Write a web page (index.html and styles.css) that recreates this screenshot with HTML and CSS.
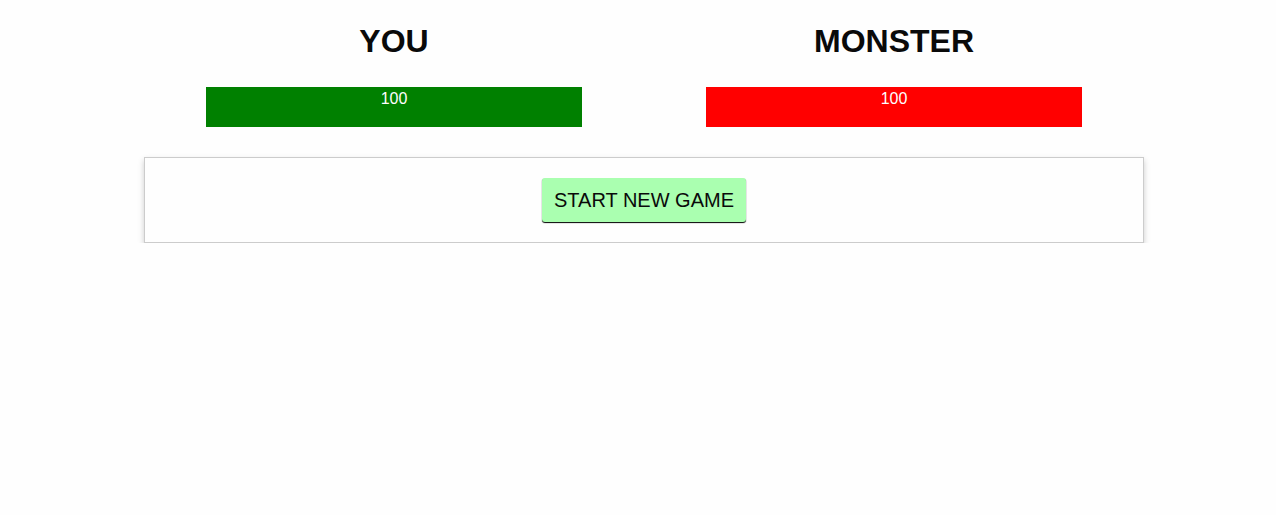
FILE: index.html
```html
<!DOCTYPE html>
<html lang="en">
<head>
<meta charset="utf-8">
<title>Monster Slayer</title>
<link rel="stylesheet" href="styles.css">
</head>
<body>
<div class="app">
  <section class="row">
    <div class="column">
      <h1 class="name">YOU</h1>
      <div class="healthbar">
        <div class="health health-player" style="width: 100%">100</div>
      </div>
    </div>
    <div class="column">
      <h1 class="name">MONSTER</h1>
      <div class="healthbar">
        <div class="health health-monster" style="width: 100%">100</div>
      </div>
    </div>
  </section>
  <section class="controls">
    <button class="start-game">START NEW GAME</button>
  </section>
</div>
</body>
</html>
```

FILE: styles.css
```css
html, body {
  margin: 0;
  background: #fefefe;
  color: #0a0a0a;
  font-family: "Liberation Sans", Arial, sans-serif;
}

body {
  padding: 0 0 0 12px;
}

.app {
  width: 1000px;
  margin: 0 auto;
}

.row {
  display: flex;
}

.column {
  width: 50%;
  padding: 0 15px;
  box-sizing: border-box;
  text-align: center;
}

.name {
  font-size: 32px;
  font-weight: bold;
  line-height: 40px;
  margin: 21px 0 26px;
}

.healthbar {
  width: 80%;
  height: 40px;
  margin: 0 auto;
  background-color: #eee;
}

.health {
  height: 100%;
  color: #fefefe;
  font-size: 16px;
  line-height: 24px;
  text-align: center;
}

.health-player {
  background-color: #008000;
}

.health-monster {
  background-color: #ff0000;
}

.controls {
  margin-top: 30px;
  padding: 10px;
  text-align: center;
  border: 1px solid #ccc;
  box-shadow: 0 3px 6px #ccc;
}

.start-game {
  font-family: "Liberation Sans", Arial, sans-serif;
  font-size: 20px;
  line-height: 20px;
  color: #0a0a0a;
  background-color: #aaffb0;
  padding: 12px;
  margin: 10px;
  border: none;
  border-radius: 3px;
  box-shadow: 0 1px 1px #000;
  cursor: pointer;
}
```
